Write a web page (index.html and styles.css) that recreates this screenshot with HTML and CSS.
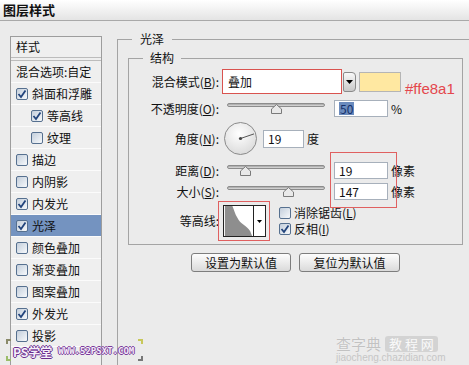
FILE: index.html
```html
<!DOCTYPE html>
<html lang="zh-CN">
  <head>
    <meta charset="UTF-8" />
    <title>图层样式</title>
    <link rel="stylesheet" href="styles.css">
  </head>
  <body>
    <div class="titlebar">图层样式</div>
    <div class="main">
      <div class="sidebar">
        <div class="side-head">样式</div>
        <div class="side-blend">混合选项:自定</div>
        <div class="side-row"><span class="cb"><svg viewBox="0 0 10 10"><polyline points="1.5,5 4,8 8.5,1.5"/></svg></span>斜面和浮雕</div>
        <div class="side-row sub"><span class="cb"><svg viewBox="0 0 10 10"><polyline points="1.5,5 4,8 8.5,1.5"/></svg></span>等高线</div>
        <div class="side-row sub"><span class="cb"></span>纹理</div>
        <div class="side-row"><span class="cb"></span>描边</div>
        <div class="side-row"><span class="cb"></span>内阴影</div>
        <div class="side-row"><span class="cb"><svg viewBox="0 0 10 10"><polyline points="1.5,5 4,8 8.5,1.5"/></svg></span>内发光</div>
        <div class="side-row active"><span class="cb"><svg viewBox="0 0 10 10"><polyline points="1.5,5 4,8 8.5,1.5"/></svg></span>光泽</div>
        <div class="side-row"><span class="cb"></span>颜色叠加</div>
        <div class="side-row"><span class="cb"></span>渐变叠加</div>
        <div class="side-row"><span class="cb"></span>图案叠加</div>
        <div class="side-row"><span class="cb"><svg viewBox="0 0 10 10"><polyline points="1.5,5 4,8 8.5,1.5"/></svg></span>外发光</div>
        <div class="side-row"><span class="cb"></span>投影</div>
      </div>

      <fieldset class="group outer">
        <legend>光泽</legend>
        <fieldset class="group inner">
          <legend>结构</legend>

          <div class="row row-blend">
            <span class="lbl">混合模式(<u>B</u>):</span>
            <div class="select">叠加</div>
            <div class="drop"><svg viewBox="0 0 7 4"><polygon points="0,0 7,0 3.5,4"/></svg></div>
            <div class="swatch"></div>
            <span class="hex">#ffe8a1</span>
          </div>

          <div class="row row-line row-opacity">
            <span class="lbl">不透明度(<u>O</u>):</span>
            <div class="slider">
              <div class="track"></div>
              <svg class="thumb" style="left: 44px" viewBox="0 0 11 10"><polygon points="5.5,0.5 10.5,5 10.5,9.5 0.5,9.5 0.5,5"/></svg>
            </div>
            <div class="field"><span class="sel">50</span></div>
            <span class="unit">%</span>
          </div>

          <div class="row row-angle">
            <span class="lbl">角度(<u>N</u>):</span>
            <svg class="dial" viewBox="0 0 33 33">
              <defs>
                <radialGradient id="dialFill" cx="0.45" cy="0.35" r="0.7">
                  <stop offset="0" stop-color="#ffffff"/>
                  <stop offset="1" stop-color="#d9d9d9"/>
                </radialGradient>
              </defs>
              <circle cx="16.5" cy="16.5" r="16" fill="url(#dialFill)" stroke="#8a8a8a"/>
              <line x1="16.5" y1="16.5" x2="30" y2="11.9" stroke="#555" stroke-width="1"/>
              <circle cx="16.5" cy="16.5" r="1.6" fill="#444"/>
            </svg>
            <div class="field field-angle">19</div>
            <span class="unit">度</span>
          </div>

          <div class="pair">
            <div class="row row-line">
              <span class="lbl">距离(<u>D</u>):</span>
              <div class="slider">
                <div class="track"></div>
                <svg class="thumb" style="left: 13px" viewBox="0 0 11 10"><polygon points="5.5,0.5 10.5,5 10.5,9.5 0.5,9.5 0.5,5"/></svg>
              </div>
              <div class="field">19</div>
              <span class="unit">像素</span>
            </div>
            <div class="row row-line row-size">
              <span class="lbl">大小(<u>S</u>):</span>
              <div class="slider">
                <div class="track"></div>
                <svg class="thumb" style="left: 56px" viewBox="0 0 11 10"><polygon points="5.5,0.5 10.5,5 10.5,9.5 0.5,9.5 0.5,5"/></svg>
              </div>
              <div class="field">147</div>
              <span class="unit">像素</span>
            </div>
            <div class="mark mark-pair"></div>
          </div>

          <div class="row row-contour">
            <span class="lbl">等高线:</span>
            <div class="mark-box">
              <div class="contour">
                <svg class="curve" viewBox="0 0 29 32"><path d="M0,0 L8,0 C10,5 11,9 13,12 C15,16 17,18 20,20 C23,22 25,24 27,27 L29,32 L0,32 Z"/></svg>
                <div class="contour-arrow"><svg viewBox="0 0 5 3"><polygon points="0,0 5,0 2.5,3"/></svg></div>
              </div>
            </div>
            <div class="checks">
              <div class="check"><span class="cb"></span>消除锯齿(<u>L</u>)</div>
              <div class="check"><span class="cb"><svg viewBox="0 0 10 10"><polyline points="1.5,5 4,8 8.5,1.5"/></svg></span>反相(<u>I</u>)</div>
            </div>
          </div>
        </fieldset>

        <div class="buttons">
          <button class="btn">设置为默认值</button>
          <button class="btn btn-wide">复位为默认值</button>
        </div>
      </fieldset>
    </div>

    <div class="wm-ps">
      <span class="corner corner-tl"></span>
      <span class="corner corner-tr"></span>
      <span class="corner corner-bl"></span>
      <span class="corner corner-br"></span>
      <span class="wm-ps-name">PS学堂</span>
      <span class="wm-ps-url">WWW.52PSXT.COM</span>
    </div>
    <div class="wm-czd">
      <div class="wm-czd-top"><span class="wm-czd-name">查字典</span><span class="wm-czd-box">教 程 网</span></div>
      <div class="wm-czd-url">jiaocheng.chazidian.com</div>
    </div>
  </body>
</html>
```

FILE: styles.css
```css
* {
  box-sizing: border-box;
}
body {
  margin: 0;
  width: 469px;
  height: 365px;
  overflow: hidden;
  position: relative;
  background: #ebebeb;
  font-family: "Noto Sans CJK SC", sans-serif;
  font-size: 12px;
  line-height: 16px;
  color: #111;
}
u {
  text-decoration: underline;
}
.titlebar {
  height: 21px;
  padding: 2px 0 0 3px;
  font-size: 13px;
  font-weight: bold;
  background: linear-gradient(#ffffff, #e4e4e4);
  border-bottom: 1px solid #a9a9a9;
}
.main {
  display: flex;
  height: 344px;
  padding-top: 10px;
}

/* style list */
.sidebar {
  flex-shrink: 0;
  width: 92px;
  margin: 5px 0 0 10px;
  border: 1px solid #9d9d9d;
  border-bottom: none;
  background: #efefef;
}
.side-head {
  height: 21px;
  padding-left: 5px;
  display: flex;
  align-items: center;
  border-bottom: 1px solid #bcbcbc;
}
.side-blend {
  height: 23px;
  margin-top: 2px;
  padding-left: 5px;
  display: flex;
  align-items: center;
  border-top: 1px solid #bcbcbc;
  border-bottom: 1px solid #fbfbfb;
}
.side-row {
  height: 22px;
  padding-left: 5px;
  display: flex;
  align-items: center;
  border-bottom: 1px solid #fbfbfb;
}
.side-row.sub {
  padding-left: 20px;
}
.side-row.active {
  background: #7493c0;
}
.cb {
  flex-shrink: 0;
  width: 12px;
  height: 12px;
  margin-right: 4px;
  border: 1px solid #56708f;
  border-radius: 2px;
  background: linear-gradient(135deg, #c3cedb, #f7f9fb);
  display: flex;
}
.cb svg {
  width: 10px;
  height: 10px;
}
.cb polyline {
  fill: none;
  stroke: #22447c;
  stroke-width: 1.8;
}

/* group boxes */
.group {
  margin: 0;
  padding: 0;
  min-width: 0;
  border: 1px solid #a4a4a4;
}
.group > legend {
  line-height: 16px;
}
.outer {
  flex: 1;
  margin-left: 15px;
  padding: 3px 0 0 10px;
  border-right: none;
  border-bottom: none;
}
.outer > legend {
  margin-left: 4px;
  padding: 0 8px;
}
.inner {
  width: 335px;
  padding: 3px 0 3px 0;
}
.inner > legend {
  margin-left: 14px;
  padding: 0 7px;
}

.row {
  display: flex;
  align-items: center;
}
.lbl {
  flex-shrink: 0;
  width: 90px;
  text-align: right;
}
.row-blend {
  height: 25px;
}
.select {
  width: 120px;
  height: 25px;
  margin-left: 3px;
  padding-left: 5px;
  display: flex;
  align-items: center;
  background: #fff;
  border: 1px solid #d9534f;
}
.drop {
  width: 13px;
  height: 20px;
  margin-left: 1px;
  display: flex;
  align-items: center;
  justify-content: center;
  border: 1px solid #8a8a8a;
  border-radius: 2px 4px 4px 2px;
  background: linear-gradient(#f8f8f8, #c9c9c9);
}
.drop svg {
  width: 7px;
  height: 4px;
}
.swatch {
  width: 42px;
  height: 20px;
  margin-left: 3px;
  background: #ffe8a1;
  border: 1px solid #b5b5b5;
}
.hex {
  align-self: flex-end;
  margin: 0 0 -3px 4px;
  font-family: "Liberation Sans", sans-serif;
  font-size: 15px;
  line-height: 17px;
  color: #e4474d;
}

.row-line {
  height: 17px;
  margin-top: 7px;
}
.row-opacity {
  margin-top: 6px;
}
.slider {
  position: relative;
  width: 98px;
  height: 17px;
  margin-left: 8px;
}
.track {
  position: absolute;
  top: 3px;
  left: 0;
  right: 0;
  height: 4px;
  border: 1px solid #8c8c8c;
  border-radius: 2px;
  background: linear-gradient(#a3a3a3, #dedede);
}
.thumb {
  position: absolute;
  top: 4px;
  width: 11px;
  height: 10px;
}
.thumb polygon {
  fill: #e9e9e9;
  stroke: #7a7a7a;
}
.field {
  width: 54px;
  height: 17px;
  margin-left: 9px;
  padding-left: 4px;
  display: flex;
  align-items: center;
  background: #fff;
  border: 1px solid #a7b0bb;
}
.sel {
  padding: 0 1px;
  background: #6b8bbd;
  color: #14306a;
  line-height: 13px;
}
.unit {
  margin-left: 3px;
}

.row-angle {
  height: 33px;
  margin-top: 5px;
}
.dial {
  width: 33px;
  height: 33px;
  margin-left: 5px;
}
.field-angle {
  width: 41px;
  height: 18px;
  margin-left: 6px;
}

.pair {
  position: relative;
  margin-top: 7px;
}
.pair .row-line {
  margin-top: 0;
}
.pair .row-size {
  margin-top: 4px;
}
.mark {
  position: absolute;
  border: 1px solid #e06060;
}
.mark-pair {
  left: 201px;
  top: -10px;
  width: 67px;
  height: 56px;
}

.row-contour {
  height: 40px;
  margin-top: 1px;
}
.mark-box {
  margin-left: -1px;
  padding: 3px 3px 3px 4px;
  border: 1px solid #e06060;
}
.contour {
  width: 43px;
  height: 32px;
  display: flex;
  background: #fff;
  border: 1px solid #222;
}
.curve {
  width: 29px;
  height: 30px;
}
.curve path {
  fill: #8e8e8e;
}
.contour-arrow {
  width: 12px;
  display: flex;
  align-items: center;
  justify-content: center;
  border-left: 1px solid #222;
}
.contour-arrow svg {
  width: 5px;
  height: 3px;
}
.checks {
  margin-left: 9px;
}
.check {
  height: 16px;
  display: flex;
  align-items: center;
}
.check .cb {
  margin-right: 3px;
}

/* buttons */
.buttons {
  display: flex;
  gap: 8px;
  margin: 8px 0 0 63px;
}
.btn {
  width: 100px;
  height: 19px;
  padding: 0;
  font-family: "Noto Sans CJK SC", sans-serif;
  font-size: 12px;
  line-height: 16px;
  color: #111;
  border: 1px solid #7d7d7d;
  border-radius: 3px;
  background: linear-gradient(#fdfdfd, #dadada);
}
.btn-wide {
  width: 101px;
}

/* watermarks */
.wm-ps {
  position: absolute;
  left: 6px;
  top: 339px;
  width: 137px;
  height: 19px;
  padding-left: 7px;
  display: flex;
  align-items: flex-end;
  gap: 6px;
}
.corner {
  position: absolute;
  width: 5px;
  height: 5px;
  border: 2px solid #8a8a6a;
}
.corner-tl {
  left: 0;
  top: 0;
  border-right: none;
  border-bottom: none;
}
.corner-tr {
  right: 0;
  top: 0;
  border-left: none;
  border-bottom: none;
  border-color: #c8c85a;
}
.corner-bl {
  left: 0;
  bottom: -3px;
  border-right: none;
  border-top: none;
  border-color: #9bbd6a;
}
.corner-br {
  right: 0;
  bottom: -3px;
  border-left: none;
  border-top: none;
  border-color: #777;
}
.wm-ps-name {
  font-weight: bold;
  font-size: 12px;
  line-height: 13px;
  color: #f6f0fb;
  text-shadow: 1px 0 #6a2d8e, -1px 0 #6a2d8e, 0 1px #6a2d8e, 0 -1px #6a2d8e;
}
.wm-ps-url {
  margin-bottom: 2px;
  font-family: "DejaVu Sans Mono", monospace;
  font-weight: bold;
  font-size: 9px;
  line-height: 10px;
  color: #f3ecf8;
  text-shadow: 1px 0 #7b3d9c, -1px 0 #7b3d9c, 0 1px #7b3d9c, 0 -1px #7b3d9c;
}
.wm-czd {
  position: absolute;
  left: 336px;
  top: 335px;
  color: #c2c2c2;
}
.wm-czd-top {
  display: flex;
  align-items: center;
  gap: 4px;
}
.wm-czd-name {
  font-size: 15px;
  line-height: 17px;
  text-shadow: 0 0 1px #fff;
}
.wm-czd-box {
  padding: 0 4px;
  font-size: 13px;
  line-height: 16px;
  color: #fafafa;
  background: #d3d3d3;
  border-radius: 3px;
}
.wm-czd-url {
  font-family: "Liberation Sans", sans-serif;
  font-size: 10px;
  line-height: 11px;
  color: #c6c6c6;
}
```
